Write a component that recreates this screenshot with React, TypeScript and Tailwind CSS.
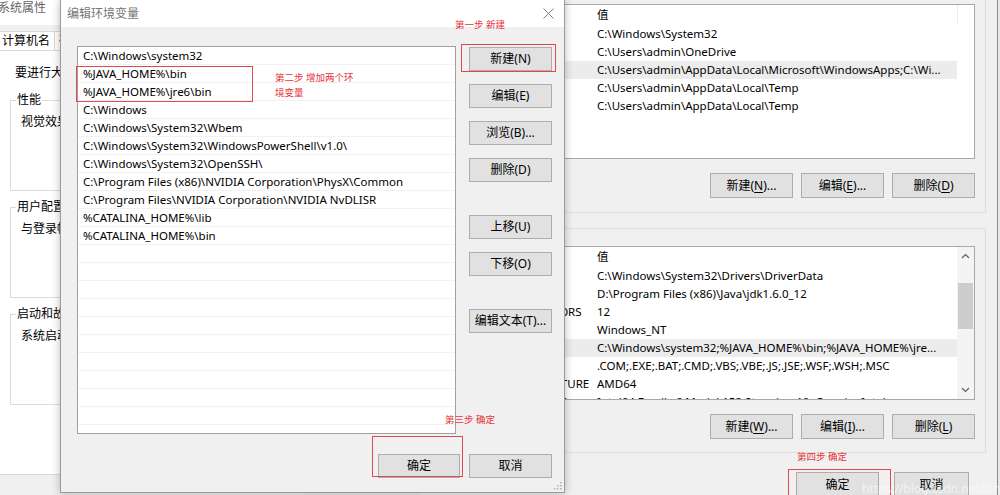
import React from "react";

const midRows = [
  "C:\\Windows\\system32",
  "%JAVA_HOME%\\bin",
  "%JAVA_HOME%\\jre6\\bin",
  "C:\\Windows",
  "C:\\Windows\\System32\\Wbem",
  "C:\\Windows\\System32\\WindowsPowerShell\\v1.0\\",
  "C:\\Windows\\System32\\OpenSSH\\",
  "C:\\Program Files (x86)\\NVIDIA Corporation\\PhysX\\Common",
  "C:\\Program Files\\NVIDIA Corporation\\NVIDIA NvDLISR",
  "%CATALINA_HOME%\\lib",
  "%CATALINA_HOME%\\bin",
];

const userVars: [string, string][] = [
  ["ChocolateyInstall", "C:\\Windows\\System32"],
  ["OneDrive", "C:\\Users\\admin\\OneDrive"],
  ["Path", "C:\\Users\\admin\\AppData\\Local\\Microsoft\\WindowsApps;C:\\Wi..."],
  ["TEMP", "C:\\Users\\admin\\AppData\\Local\\Temp"],
  ["TMP", "C:\\Users\\admin\\AppData\\Local\\Temp"],
];

const sysVars: [string, string][] = [
  ["DriverData", "C:\\Windows\\System32\\Drivers\\DriverData"],
  ["JAVA_HOME", "D:\\Program Files (x86)\\Java\\jdk1.6.0_12"],
  ["NUMBER_OF_PROCESSORS", "12"],
  ["OS", "Windows_NT"],
  ["Path", "C:\\Windows\\system32;%JAVA_HOME%\\bin;%JAVA_HOME%\\jre..."],
  ["PATHEXT", ".COM;.EXE;.BAT;.CMD;.VBS;.VBE;.JS;.JSE;.WSF;.WSH;.MSC"],
  ["PROCESSOR_ARCHITECTURE", "AMD64"],
  ["PROCESSOR_IDENTIFIER", "Intel64 Family 6 Model 158 Stepping 10, GenuineIntel"],
];

function Btn({ children, className = "" }: { children: React.ReactNode; className?: string }) {
  return (
    <div
      className={`flex items-center justify-center h-[24px] border border-[#adadad] bg-[#e1e1e1] text-[12px] leading-none text-black ${className}`}
    >
      {children}
    </div>
  );
}

function Mn({ pre, k, post }: { pre: string; k: string; post: string }) {
  return (
    <span>
      {pre}(<span className="underline underline-offset-2">{k}</span>){post}
    </span>
  );
}

function ListView({
  rows,
  highlight,
  scrollbar,
  heightClass,
}: {
  rows: [string, string][];
  highlight: number;
  scrollbar: boolean;
  heightClass: string;
}) {
  return (
    <div className={`flex border border-[#a8a8a8] bg-white overflow-hidden ${heightClass}`}>
      <div className="flex-1 flex flex-col overflow-hidden">
        <div className="flex h-[20px] shrink-0 items-center text-[11.5px]">
          <div className="w-[150px] shrink-0 pl-[6px] overflow-hidden whitespace-nowrap">变量</div>
          <div className="flex-1 pl-[5px]">值</div>
        </div>
        {rows.map(([n, v], i) => (
          <div
            key={i}
            className={`flex h-[18px] shrink-0 items-center text-[11.5px] whitespace-nowrap ${
              i === highlight ? "bg-[#ececec]" : ""
            }`}
          >
            <div className="w-[150px] shrink-0 overflow-hidden whitespace-nowrap indent-[-6px]">{n}</div>
            <div className="flex-1 pl-[5px] overflow-hidden">{v}</div>
          </div>
        ))}
      </div>
      {scrollbar ? (
        <div className="w-[17px] shrink-0 bg-[#f4f4f4] flex flex-col items-center">
          <svg width="9" height="17" viewBox="0 0 9 17" className="mt-[1px]">
            <path d="M1 10 L4.5 6.5 L8 10" fill="none" stroke="#606060" strokeWidth="1.2" />
          </svg>
          <div className="mt-[18px] w-[15px] h-[46px] bg-[#cdcdcd]" />
          <div className="flex-1" />
          <svg width="9" height="17" viewBox="0 0 9 17" className="mb-[1px]">
            <path d="M1 7 L4.5 10.5 L8 7" fill="none" stroke="#606060" strokeWidth="1.2" />
          </svg>
        </div>
      ) : (
        <div className="w-[17px] shrink-0 flex flex-col">
          <div className="h-[20px] border-l border-[#ececec]" />
        </div>
      )}
    </div>
  );
}

function Group({ title, children }: { title: string; children: React.ReactNode }) {
  return (
    <fieldset className="ml-[13px] mr-[6px] h-[99px] border border-[#dcdcdc]">
      <legend className="ml-[5px] px-[1px] text-[12px] leading-[16px] text-black">{title}</legend>
      <div className="mt-[6px] pl-[10px] text-[12px] leading-[16px] whitespace-nowrap">{children}</div>
    </fieldset>
  );
}

function Note({ children, className = "" }: { children: React.ReactNode; className?: string }) {
  return (
    <div className={`absolute text-[9.5px] leading-[15px] text-[#e8333a] whitespace-nowrap ${className}`}>{children}</div>
  );
}

export default function App() {
  return (
    <div className="relative w-[1000px] h-[495px] overflow-hidden bg-[#e9e9e9] text-black font-['Noto_Sans','Noto_Sans_CJK_SC',sans-serif]">
      {/* Background: 系统属性 */}
      <div className="absolute left-[-16px] top-0 w-[320px] h-[495px] bg-[#f0f0f0] flex flex-col">
        <div className="h-[25px] shrink-0 bg-white pl-[14px] text-[12px] leading-[16px] text-[#666]">系统属性</div>
        <div className="h-[6px] shrink-0" />
        <div className="flex h-[19px] shrink-0 ml-[12px] text-[12px] leading-[16px]">
          <div className="bg-white border-t border-l border-[#d9d9d9] pl-[5px] pr-[4px] flex items-center">计算机名</div>
          <div className="bg-white border-t border-l border-[#d9d9d9] px-[4px] flex items-center">硬件</div>
          <div className="bg-white border-t border-l border-[#d9d9d9] px-[4px] flex items-center">高级</div>
          <div className="bg-white border-t border-l border-r border-[#d9d9d9] px-[4px] flex items-center">系统保护</div>
        </div>
        <div className="ml-[12px] h-[425px] shrink-0 bg-white border border-[#d9d9d9] pt-[14px] flex flex-col">
          <div className="pl-[18px] text-[12px] leading-[16px] whitespace-nowrap">要进行大多数更改，你必须作为管理员登录。</div>
          <div className="mt-[11px]">
            <Group title="性能">视觉效果，处理器计划，内存使用，以及虚拟内存</Group>
          </div>
          <div className="mt-[8px]">
            <Group title="用户配置文件">与登录帐户相关的桌面设置</Group>
          </div>
          <div className="mt-[8px]">
            <Group title="启动和故障恢复">系统启动、系统故障和调试信息</Group>
          </div>
        </div>
      </div>

      {/* Right: 环境变量 */}
      <div className="absolute left-[420px] top-[-50px] w-[578px] h-[545px] bg-[#f0f0f0] border-r border-[#8a8a8a] flex flex-col">
        <div className="mt-[20px] ml-[10px] mr-[11px] border border-[#dcdcdc] px-[10px] pt-[33px] pb-[14px] flex flex-col">
          <ListView rows={userVars} highlight={2} scrollbar={false} heightClass="h-[155px]" />
          <div className="mt-[14px] flex justify-end gap-[8px]">
            <Btn className="w-[83px] h-[25px]"><Mn pre="新建" k="N" post="..." /></Btn>
            <Btn className="w-[83px] h-[25px]"><Mn pre="编辑" k="E" post="..." /></Btn>
            <Btn className="w-[83px] h-[25px]"><Mn pre="删除" k="D" post="" /></Btn>
          </div>
        </div>
        <div className="mt-[15px] ml-[10px] mr-[11px] border border-[#dcdcdc] px-[10px] pt-[17px] pb-[13px] flex flex-col">
          <ListView rows={sysVars} highlight={4} scrollbar={true} heightClass="h-[154px]" />
          <div className="mt-[14px] flex justify-end gap-[8px]">
            <Btn className="w-[83px] h-[25px]"><Mn pre="新建" k="W" post="..." /></Btn>
            <Btn className="w-[83px] h-[25px]"><Mn pre="编辑" k="I" post="..." /></Btn>
            <Btn className="w-[83px] h-[25px]"><Mn pre="删除" k="L" post="" /></Btn>
          </div>
        </div>
        <div className="mt-[19px] flex justify-end gap-[15px] pr-[28px]">
          <Btn className="w-[83px] h-[25px]">确定</Btn>
          <Btn className="w-[75px] h-[25px]">取消</Btn>
        </div>
      </div>

      {/* Middle dialog: 编辑环境变量 */}
      <div className="absolute left-[60px] top-0 w-[505px] h-[493px] bg-[#f0f0f0] border-x border-b border-[#9a9a9a] shadow-[0_0_8px_rgba(0,0,0,0.28)] flex flex-col">
        <div className="h-[27px] shrink-0 bg-white flex items-center justify-between pl-[6px] pr-[10px]">
          <span className="text-[12px] leading-[16px] text-[#777]">编辑环境变量</span>
          <svg width="11" height="11" viewBox="0 0 11 11">
            <path d="M0.5 0.5 L10.5 10.5 M10.5 0.5 L0.5 10.5" stroke="#808080" strokeWidth="1" />
          </svg>
        </div>
        <div className="flex pl-[16px] pt-[19px]">
          <div className="w-[379px] h-[388px] border border-[#a0a0a0] bg-white overflow-hidden flex flex-col">
            {Array.from({ length: 22 }).map((_, i) => (
              <div
                key={i}
                className="h-[18px] shrink-0 border-b border-[#f2f2f2] pl-[5px] flex items-center text-[11.5px] whitespace-nowrap"
              >
                {midRows[i] ?? ""}
              </div>
            ))}
          </div>
          <div className="ml-[13px] w-[83px] pt-[1px] flex flex-col">
            <Btn>新建(N)</Btn>
            <Btn className="mt-[13px]">编辑(E)</Btn>
            <Btn className="mt-[13px]">浏览(B)...</Btn>
            <Btn className="mt-[13px]">删除(D)</Btn>
            <Btn className="mt-[33px]">上移(U)</Btn>
            <Btn className="mt-[13px]">下移(O)</Btn>
            <Btn className="mt-[33px]">编辑文本(T)...</Btn>
          </div>
        </div>
        <div className="mt-[20px] flex justify-end gap-[9px] pr-[12px]">
          <Btn className="w-[82px]">确定</Btn>
          <Btn className="w-[83px]">取消</Btn>
        </div>
        <svg width="8" height="8" viewBox="0 0 8 8" className="absolute right-[2px] bottom-[2px]">
          <rect x="6" y="0" width="1.5" height="1.5" fill="#b0b0b0" />
          <rect x="3" y="3" width="1.5" height="1.5" fill="#b0b0b0" />
          <rect x="6" y="3" width="1.5" height="1.5" fill="#b0b0b0" />
          <rect x="0" y="6" width="1.5" height="1.5" fill="#b0b0b0" />
          <rect x="3" y="6" width="1.5" height="1.5" fill="#b0b0b0" />
          <rect x="6" y="6" width="1.5" height="1.5" fill="#b0b0b0" />
        </svg>
      </div>

      {/* Annotations */}
      <div className="absolute left-[461px] top-[44px] w-[95px] h-[28px] border border-[#e0484e]" />
      <div className="absolute left-[76px] top-[66px] w-[177px] h-[36px] border border-[#e0484e]" />
      <div className="absolute left-[372px] top-[436px] w-[91px] h-[41px] border border-[#e0484e]" />
      <div className="absolute left-[788px] top-[469px] w-[103px] h-[30px] border border-[#e0484e]" />
      <Note className="left-[455px] top-[17px]">第一步 新建</Note>
      <Note className="left-[275px] top-[70px]">
        第二步 增加两个环
        <br />
        境变量
      </Note>
      <Note className="left-[445px] top-[412px]">第三步 确定</Note>
      <Note className="left-[797px] top-[449px]">第四步 确定</Note>
      <div className="absolute left-[862px] top-[480px] text-[12px] text-white/60 whitespace-nowrap">
        https://blog.csdn.net/sinat_36
      </div>
    </div>
  );
}
